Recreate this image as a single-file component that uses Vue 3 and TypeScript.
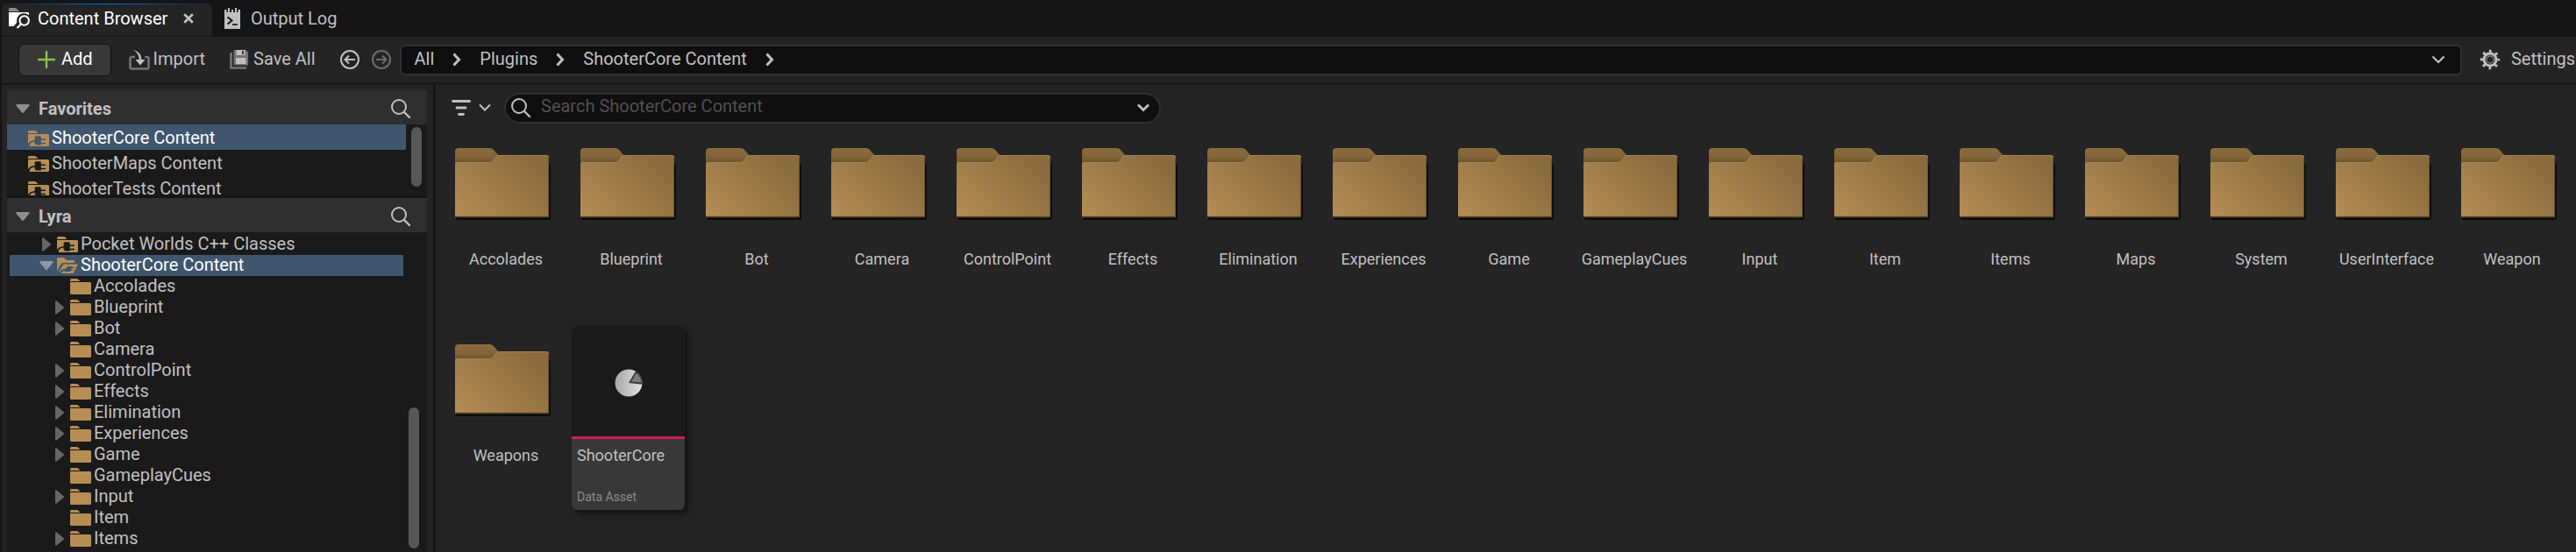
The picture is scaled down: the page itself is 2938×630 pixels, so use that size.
<script setup lang="ts">
import { ref } from 'vue'

interface TreeRow {
  name: string
  level: 1 | 2
  state: 'open' | 'closed' | 'leaf'
  icon: 'plugin' | 'pluginOpen' | 'folder'
}

const query = ref('')
const crumbs: string[] = ['All', 'Plugins', 'ShooterCore Content']
const favorites: string[] = ['ShooterCore Content', 'ShooterMaps Content', 'ShooterTests Content']

const sub = (name: string, leaf = false): TreeRow => ({
  name,
  level: 2,
  state: leaf ? 'leaf' : 'closed',
  icon: 'folder',
})

const tree: TreeRow[] = [
  { name: 'Pocket Worlds C++ Classes', level: 1, state: 'closed', icon: 'plugin' },
  { name: 'ShooterCore Content', level: 1, state: 'open', icon: 'pluginOpen' },
  sub('Accolades', true),
  sub('Blueprint'),
  sub('Bot'),
  sub('Camera', true),
  sub('ControlPoint'),
  sub('Effects'),
  sub('Elimination'),
  sub('Experiences'),
  sub('Game'),
  sub('GameplayCues', true),
  sub('Input'),
  sub('Item', true),
  sub('Items'),
]

const folders: string[] = [
  'Accolades', 'Blueprint', 'Bot', 'Camera', 'ControlPoint', 'Effects', 'Elimination',
  'Experiences', 'Game', 'GameplayCues', 'Input', 'Item', 'Items', 'Maps', 'System',
  'UserInterface', 'Weapon', 'Weapons',
]
</script>

<template>
  <div class="browser">
    <svg class="defs" width="0" height="0" aria-hidden="true">
      <defs>
        <linearGradient id="folderFace" gradientUnits="userSpaceOnUse" x1="12" y1="92" x2="90" y2="14">
          <stop offset="0" stop-color="#b68e54" />
          <stop offset="0.45" stop-color="#a07d4a" />
          <stop offset="1" stop-color="#8a6b3d" />
        </linearGradient>
        <linearGradient id="folderTab" x1="0" y1="0" x2="0" y2="1">
          <stop offset="0" stop-color="#8b6b3d" />
          <stop offset="0.5" stop-color="#84653a" />
          <stop offset="1" stop-color="#5f4a2a" />
        </linearGradient>
        <linearGradient id="pieFace" x1="0" y1="0" x2="1" y2="0">
          <stop offset="0" stop-color="#a6a6a6" />
          <stop offset="1" stop-color="#e2e2e2" />
        </linearGradient>
        <symbol id="magnifier" viewBox="0 0 24 24">
          <circle cx="10" cy="10" r="8" fill="none" stroke="currentColor" stroke-width="2" />
          <path d="M16 16L22 22" fill="none" stroke="currentColor" stroke-width="2.4" stroke-linecap="round" />
        </symbol>
        <symbol id="folder" viewBox="0 0 24 18">
          <path d="M0 3V1.5Q0 0 1.5 0H7.5Q8.5 0 9.3 .8L11.5 3Z" />
          <path d="M0 4H22.5Q24 4 24 5.5V16.5Q24 18 22.5 18H1.5Q0 18 0 16.5Z" />
        </symbol>
        <symbol id="plugin" viewBox="0 0 24 18">
          <path d="M0 3V1.5Q0 0 1.5 0H7.5Q8.5 0 9.3 .8L11.5 3Z" />
          <path
            fill-rule="evenodd"
            d="M0 4H22.5Q24 4 24 5.5V16.5Q24 18 22.5 18H1.6Q1.6 13.4 7.6 12.6V15.2H8.6V16.4H14.8V15.2H20V13.8H14.8V11H20V9.6H14.8V7.2L14 6.2H8.8L7.6 7.2V11Q2.2 11.4 0 15Z"
          />
        </symbol>
        <symbol id="pluginOpen" viewBox="0 0 24 18">
          <path d="M0 15V1.5Q0 0 1.5 0H7Q8 0 8.8 .8L10.8 3H18.5Q20 3 20 4.5V6H7Q5.6 6 4.8 7Z" />
          <path
            fill-rule="evenodd"
            d="M7.5 7.5H24L19.5 16.5Q18.8 18 17.5 18H4.5Q5.5 15.5 9 15L8.6 16H15L15.5 14.8H18.5L19 13.8H16L17 12H20L20.5 11H17.5L17.8 10H12L10 12.8Q5 13 2.5 16.5L1.3 17.2Z"
          />
        </symbol>
        <symbol id="bigFolder" viewBox="0 0 112 86">
          <path d="M3 23Q3 20 5 20H107Q110 20 110 22V82Q110 84 108 84H4Q2 84 2 82V23Z" fill="#0e0e0e" />
          <path d="M1 22V6Q1 2 5 2H41Q43 2 44.5 3.5L52 12 44 22Z" fill="url(#folderTab)" />
          <path d="M1 20V81H108V13Q108 10 105 10H49.5L44 17Q42.6 18.5 40.5 18.5H3Q1 18.5 1 20Z" fill="url(#folderFace)" />
          <path d="M1.5 20Q1.5 18.5 3 18.5H40.5Q42.6 18.5 44 17L49.5 10.5H105Q107.5 10.5 107.5 13" fill="none" stroke="#a98350" stroke-width="1" />
          <path d="M107.5 13V80" stroke="#6b5330" stroke-width="1" />
          <path d="M1 80.5H108" stroke="#5c4628" stroke-width="1.5" />
        </symbol>
      </defs>
    </svg>

    <header class="tabs">
      <div class="tab active">
        <svg class="icon" width="24" height="24" viewBox="0 0 24 24" aria-hidden="true">
          <path d="M0 4V1.5Q0 0 1.5 0H7Q8 0 9 1L12 4Z" fill="#8f8f8f" />
          <path d="M0 5H21.5Q23 5 23 6.5V21H0Z" fill="#fff" />
          <circle cx="17.5" cy="14.5" r="8.5" fill="#242424" />
          <path d="M13 17L7 24" stroke="#242424" stroke-width="6" />
          <path d="M14 5H21.5Q23 5 23 6.5V8Q18 4.500 13 7Z" fill="#fff" />
          <circle cx="17.7" cy="14.5" r="5.2" fill="none" stroke="#fff" stroke-width="2" />
          <path d="M14 18.5L9.5 23" stroke="#fff" stroke-width="2.2" />
        </svg>
        <span>Content Browser</span>
        <button class="plain close" type="button" aria-label="Close tab">
          <svg width="12" height="12" viewBox="0 0 10 10"><path d="M1 1L9 9M9 1L1 9" stroke="#c0c0c0" stroke-width="2.2" /></svg>
        </button>
      </div>
      <div class="tab">
        <svg class="icon" width="18" height="24" viewBox="0 0 18 24" aria-hidden="true">
          <path d="M0 2H2.5V5H4V0H6V5H8V2H10V5H12V0H14V5H15.5V2H18V24H0Z" fill="#c0c0c0" />
          <path d="M3.5 10.5L8.5 14.5L3.5 18.5" fill="none" stroke="#151515" stroke-width="2" />
          <path d="M9 19H15" stroke="#151515" stroke-width="1.6" />
        </svg>
        <span>Output Log</span>
      </div>
    </header>

    <div class="toolbar">
      <button class="add" type="button">
        <svg width="20" height="20" viewBox="0 0 20 20" aria-hidden="true">
          <path d="M10 1V19M1 10H19" stroke="#8bc34a" stroke-width="2.4" stroke-linecap="round" />
        </svg>
        <span>Add</span>
      </button>
      <button class="plain tool import" type="button">
        <svg width="24" height="24" viewBox="0 0 24 24" aria-hidden="true">
          <path d="M7 9H3.5Q1.5 9 1.5 11V20.5Q1.5 22.5 3.5 22.5H20.5Q22.5 22.5 22.5 20.5V11Q22.5 9 20.5 9H18" fill="none" stroke="#737373" stroke-width="2.6" />
          <path d="M5 1Q14 3 14.4 12H18.5L13 18.5 7.5 12H11.8Q11.5 5 5 1Z" fill="#c0c0c0" />
        </svg>
        <span>Import</span>
      </button>
      <button class="plain tool save" type="button">
        <svg width="24" height="24" viewBox="0 0 24 24" aria-hidden="true">
          <path d="M2.5 4V21.5H20" fill="none" stroke="#737373" stroke-width="2.6" />
          <path d="M6.5 1H19.5L22 3.5V17.5Q22 18.5 21 18.5H6.5Q5.5 18.5 5.5 17.5V2Q5.5 1 6.5 1Z" fill="#737373" />
          <path d="M8.5 1H18.5V7H8.5ZM8 10H19.5V17H8Z" fill="#c0c0c0" />
          <path d="M15 2H17V6H15Z" fill="#3a3a3a" />
        </svg>
        <span>Save All</span>
      </button>
      <button class="plain nav" type="button" aria-label="Back">
        <svg width="24" height="24" viewBox="0 0 24 24">
          <g fill="none" stroke="#c0c0c0" stroke-width="2"><circle cx="12" cy="12" r="10" /><path d="M18 12H7M11 7.5L6.5 12L11 16.5" /></g>
        </svg>
      </button>
      <button class="plain nav" type="button" aria-label="Forward" disabled>
        <svg width="24" height="24" viewBox="0 0 24 24">
          <g fill="none" stroke="#6c6c6c" stroke-width="2"><circle cx="12" cy="12" r="10" /><path d="M6 12H17M13 7.5L17.5 12L13 16.5" /></g>
        </svg>
      </button>
      <nav class="path" aria-label="Current folder">
        <template v-for="crumb in crumbs" :key="crumb">
          <a href="#">{{ crumb }}</a>
          <svg class="sep" width="10" height="16" viewBox="0 0 10 16" aria-hidden="true">
            <path d="M1.5 1.5L7.5 8L1.5 14.5" fill="none" stroke="#c0c0c0" stroke-width="3" />
          </svg>
        </template>
        <button class="plain history" type="button" aria-label="Folder history">
          <svg width="16" height="10" viewBox="0 0 16 10"><path d="M1.5 1.5L8 8L14.5 1.5" fill="none" stroke="#c0c0c0" stroke-width="2.2" /></svg>
        </button>
      </nav>
      <button class="plain settings" type="button">
        <svg width="24" height="24" viewBox="0 0 24 24" aria-hidden="true">
          <circle cx="12" cy="12" r="7" fill="none" stroke="#c0c0c0" stroke-width="3" />
          <circle cx="12" cy="12" r="9.5" fill="none" stroke="#c0c0c0" stroke-width="3.4" stroke-dasharray="2.8 4.66" stroke-dashoffset="1.4" />
          <circle cx="12" cy="12" r="4" fill="none" stroke="#808080" stroke-width="1.3" />
        </svg>
        <span>Settings</span>
      </button>
    </div>

    <div class="body">
      <aside class="sidebar">
        <section class="panel favorites">
          <div class="head">
            <svg width="16" height="10" viewBox="0 0 16 10" aria-hidden="true"><path d="M1 0H15L16 1L8.5 10H7.5L0 1Z" fill="#8f8f8f" /></svg>
            <h2>Favorites</h2>
            <button class="plain" type="button" aria-label="Search favorites"><svg width="24" height="24"><use href="#magnifier" /></svg></button>
          </div>
          <ul class="list">
            <li v-for="(name, i) in favorites" :key="name" :class="{ selected: i === 0 }">
              <svg class="folder" width="24" height="18" aria-hidden="true"><use href="#plugin" /></svg>
              <span class="name">{{ name }}</span>
            </li>
          </ul>
          <div class="thumb"></div>
        </section>

        <section class="panel sources">
          <div class="head">
            <svg width="16" height="10" viewBox="0 0 16 10" aria-hidden="true"><path d="M1 0H15L16 1L8.5 10H7.5L0 1Z" fill="#8f8f8f" /></svg>
            <h2>Lyra</h2>
            <button class="plain" type="button" aria-label="Search sources"><svg width="24" height="24"><use href="#magnifier" /></svg></button>
          </div>
          <ul class="tree" role="tree">
            <li
              v-for="row in tree"
              :key="row.name"
              role="treeitem"
              :class="{ deep: row.level === 2, selected: row.state === 'open' }"
            >
              <span class="arrow">
                <svg v-if="row.state === 'closed'" width="10" height="16" viewBox="0 0 10 16" aria-hidden="true"><path d="M0 1L1 0L10 7.5V8.5L1 16L0 15Z" fill="#666" /></svg>
                <svg v-else-if="row.state === 'open'" width="16" height="10" viewBox="0 0 16 10" aria-hidden="true"><path d="M1 0H15L16 1L8.5 10H7.5L0 1Z" fill="#8f98a2" /></svg>
              </span>
              <svg class="folder" width="24" height="18" aria-hidden="true"><use :href="'#' + row.icon" /></svg>
              <span class="name">{{ row.name }}</span>
            </li>
          </ul>
          <div class="thumb"></div>
        </section>
      </aside>

      <main class="content">
        <div class="filter">
          <button class="plain filters" type="button" aria-label="Filters">
            <svg width="22" height="20" viewBox="0 0 22 20"><path d="M1.5 2.5H20.5M6 10H16M8.5 17.5H13.5" stroke="#c0c0c0" stroke-width="2.8" stroke-linecap="round" /></svg>
            <svg width="14" height="10" viewBox="0 0 14 10"><path d="M1 1.5L7 7.5L13 1.5" fill="none" stroke="#c0c0c0" stroke-width="2" /></svg>
          </button>
          <div class="search">
            <label for="query" aria-label="Search"><svg width="24" height="24"><use href="#magnifier" /></svg></label>
            <input id="query" v-model="query" type="text" placeholder="Search ShooterCore Content" />
            <button class="plain" type="button" aria-label="Recent searches">
              <svg width="16" height="10" viewBox="0 0 16 10"><path d="M2 1.5L8 7.5L14 1.5" fill="none" stroke="#c0c0c0" stroke-width="2.8" /></svg>
            </button>
          </div>
        </div>

        <ul class="tiles">
          <li v-for="name in folders" :key="name" class="tile">
            <svg class="big" width="112" height="86" aria-hidden="true"><use href="#bigFolder" /></svg>
            <span class="label">{{ name }}</span>
          </li>
          <li class="tile">
            <article class="card">
              <div class="preview">
                <svg width="32" height="32" viewBox="0 0 32 32" aria-hidden="true">
                  <circle cx="16" cy="16" r="15.5" fill="url(#pieFace)" />
                  <path d="M16 16L24 2.4A15.5 15.5 0 0 1 31.5 17.8Z" fill="#3a3a3a" />
                  <path d="M19 14.6L24.6 4.8A14 14 0 0 1 30.5 15.6Z" fill="#7c7c7c" />
                </svg>
              </div>
              <div class="info">
                <span class="title">ShooterCore</span>
                <span class="kind">Data Asset</span>
              </div>
            </article>
          </li>
        </ul>
      </main>
    </div>
  </div>
</template>

<style>
body {
  margin: 0;
  background: #151515;
}
</style>

<style scoped>
.browser {
  box-sizing: border-box;
  display: flex;
  flex-direction: column;
  height: 100vh;
  padding-left: 2px;
  overflow: hidden;
  background: #151515;
  color: #c0c0c0;
  font: 20px/24px Roboto, "Liberation Sans", sans-serif;
  white-space: nowrap;
}
.browser *,
.browser *::before {
  box-sizing: border-box;
}
svg {
  display: block;
  flex: none;
}
.defs {
  position: absolute;
}
ul {
  margin: 0;
  padding: 0;
  list-style: none;
}
button,
input {
  font: inherit;
  color: inherit;
}
.plain {
  display: flex;
  align-items: center;
  flex: none;
  margin: 0;
  padding: 0;
  border: 0;
  background: none;
}

.tabs {
  display: flex;
  flex: none;
  height: 42px;
  padding: 4px 0 1px;
}
.tab {
  display: flex;
  align-items: center;
  padding: 0 14px 4px;
}
.tab span {
  margin-left: 12px;
}
.tab.active {
  width: 240px;
  padding-left: 8px;
  border-radius: 6px 6px 0 0;
  background: linear-gradient(90deg, #242424 2%, #0e6fd8 50%, #242424 98%) top / 100% 1px no-repeat, #242424;
  color: #fff;
}
.tab.active span {
  margin-left: 9px;
}
.close {
  margin-left: auto;
  margin-right: 7px;
}

.toolbar {
  display: flex;
  align-items: center;
  flex: none;
  height: 52px;
  padding-left: 19px;
  background: #242424;
}
.toolbar span,
.path a {
  padding-bottom: 2px;
}
.add {
  display: flex;
  align-items: center;
  gap: 7px;
  height: 37px;
  padding: 0 20px 0 21px;
  border: 1px solid #131313;
  border-radius: 6px;
  background: #383838;
  color: #fff;
}
.tool {
  gap: 4px;
}
.import {
  margin-left: 20px;
}
.save {
  margin-left: 27px;
}
.nav {
  margin-left: 12px;
}
.save + .nav {
  margin-left: 27px;
}
.path {
  display: flex;
  align-items: center;
  flex: 1;
  height: 35px;
  margin-left: 9px;
  padding: 0 17px 0 15px;
  border: 2px solid #2f2f2f;
  border-radius: 6px;
  background: #0f0f0f;
}
.path a {
  color: inherit;
  text-decoration: none;
}
.sep {
  margin: 0 21px;
}
.history {
  margin-left: auto;
}
.settings {
  gap: 12px;
  margin: 0 1px 0 20px;
}

.body {
  display: flex;
  flex: 1;
  min-height: 0;
  border-top: 3px solid #1a1a1a;
  background: #242424;
}
.sidebar {
  display: flex;
  flex-direction: column;
  flex: none;
  width: 495px;
  padding: 6px 7px 0 6px;
  border-right: 3px solid #161616;
}
.panel {
  position: relative;
  background: #1a1a1a;
}
.favorites {
  flex: none;
  border-bottom: 3px solid #151515;
}
.sources {
  flex: 1;
  min-height: 0;
  overflow: hidden;
}
.head {
  display: flex;
  align-items: center;
  height: 39px;
  padding: 2px 18px 0 10px;
  background: #2f2f2f;
}
.head h2 {
  flex: 1;
  margin: 0 0 0 10px;
  font-size: 20px;
  font-weight: 700;
}
.folder {
  fill: #b68e54;
}
.list {
  height: 81px;
  overflow: hidden;
}
.list li {
  display: flex;
  align-items: center;
  height: 29px;
  margin-right: 24px;
  padding: 3px 0 0 24px;
}
.selected {
  background: #40566e;
  color: #fff;
}
.thumb {
  position: absolute;
  width: 12px;
  border-radius: 6px;
  background: #575757;
}
.favorites .thumb {
  top: 42px;
  right: 6px;
  height: 68px;
}
.sources .thumb {
  right: 9px;
  bottom: 4px;
  height: 161px;
}
.tree {
  padding: 2px 27px 0 3px;
}
.tree li {
  display: flex;
  align-items: center;
  height: 24px;
  padding-left: 34px;
}
.tree .deep {
  padding-left: 49px;
}
.arrow {
  display: flex;
  justify-content: center;
  width: 16px;
  margin-right: 4px;
}
.name {
  margin-left: 3px;
  padding-bottom: 2px;
}

.content {
  flex: 1;
  min-width: 0;
}
.filter {
  display: flex;
  align-items: center;
  height: 51px;
  padding: 1px 0 0 18px;
}
.filters {
  gap: 9px;
}
.search {
  display: flex;
  align-items: center;
  width: 749px;
  height: 35px;
  margin-left: 15px;
  padding: 0 10px 0 5px;
  border: 2px solid #2f2f2f;
  border-radius: 18px;
  background: #0f0f0f;
}
.search input {
  flex: 1;
  min-width: 0;
  margin-left: 11px;
  padding: 0 0 4px;
  border: 0;
  outline: 0;
  background: none;
}
.search input::placeholder {
  color: #505050;
  opacity: 1;
}
.tiles {
  display: flex;
  flex-wrap: wrap;
  gap: 14px 7px;
  padding-left: 12px;
}
.tile {
  display: flex;
  flex-direction: column;
  width: 136px;
  height: 210px;
}
.big {
  margin: 19px 0 0 9px;
}
.label {
  margin-top: 32px;
  font-size: 18px;
  line-height: 22px;
  text-align: center;
}
.card {
  width: 129px;
  overflow: hidden;
  border-radius: 6px;
  background: #383838;
  box-shadow: 4px 4px 6px rgba(0, 0, 0, 0.5);
}
.preview {
  display: flex;
  align-items: center;
  justify-content: center;
  height: 129px;
  padding-top: 3px;
  border-bottom: 3px solid #ce1c59;
  background: #1a1a1a;
}
.info {
  display: flex;
  flex-direction: column;
  gap: 27px;
  padding: 8px 6px 6px;
}
.title {
  font-size: 18px;
  line-height: 22px;
}
.kind {
  color: #8a8a8a;
  font-size: 14px;
  line-height: 18px;
}
</style>
